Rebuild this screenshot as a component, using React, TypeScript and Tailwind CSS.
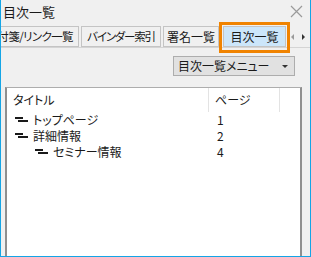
import React from "react";

interface TocRow {
  title: string;
  page: number;
  level: number;
}

const rows: TocRow[] = [
  { title: "トップページ", page: 1, level: 0 },
  { title: "詳細情報", page: 2, level: 0 },
  { title: "セミナー情報", page: 4, level: 1 },
];

function NodeIcon() {
  return (
    <svg width="13" height="6" viewBox="0 0 13 6" className="shrink-0">
      <rect x="0" y="0" width="8" height="2" fill="#1a1a1a" />
      <rect x="3" y="3" width="10" height="2" fill="#1a1a1a" />
    </svg>
  );
}

export default function App() {
  return (
    <div
      className="relative w-[311px] h-[257px] bg-[#f0f0f0] border-x border-b border-[#14a5e6] flex flex-col overflow-hidden text-[#1a1a1a] [font-feature-settings:'palt']"
      style={{ fontFamily: '"Noto Sans CJK JP", "Noto Sans", sans-serif' }}
    >
      {/* title bar */}
      <div className="h-[23px] flex items-center justify-between pl-[2px] pr-[7px] shrink-0">
        <span className="text-[13px] leading-none">目次一覧</span>
        <svg width="13" height="13" viewBox="0 0 13 13">
          <path d="M1 1 L12 12 M12 1 L1 12" stroke="#9a9a9a" strokeWidth="1.2" />
        </svg>
      </div>

      {/* tab strip */}
      <div className="h-[25px] flex items-end shrink-0 border-b border-[#d4d4d4]">
        <div className="flex items-end overflow-hidden w-[286px] h-[21px] text-[12px] whitespace-nowrap">
          <div className="h-[21px] w-[90px] shrink-0 -ml-[12px] pr-[5px] border border-[#c4c4c4] bg-[#f0f0f0] flex items-center justify-end text-[11.5px] tracking-[-0.6px]">
            付箋/リンク一覧
          </div>
          <div className="h-[21px] w-[80px] shrink-0 ml-[2px] border border-[#c4c4c4] bg-[#f0f0f0] flex items-center justify-center text-[11.5px] tracking-[-1.2px]">
            <span>バインダー索引</span>
          </div>
          <div className="h-[21px] w-[56px] shrink-0 ml-[2px] border border-[#c4c4c4] bg-[#f0f0f0] flex items-center justify-center">
            署名一覧
          </div>
          <div className="h-[21px] w-[63px] shrink-0 ml-[4px] border border-[#c4c4c4] bg-[#cce6fa] flex items-center justify-center">
            目次一覧
          </div>
        </div>
        <div className="flex items-center gap-[8px] h-[21px] pl-[4px]">
          <span className="w-0 h-0 border-y-[3px] border-y-transparent border-r-[3px] border-r-[#9a9a9a]" />
          <span className="w-0 h-0 border-y-[3px] border-y-transparent border-l-[3px] border-l-[#333]" />
        </div>
      </div>

      {/* orange highlight over the active tab */}
      <div className="absolute left-[218px] top-[22px] w-[71px] h-[31px] border-[3px] border-[#f08300]" />

      {/* panel */}
      <div className="flex-1 flex flex-col pl-[4px] pr-[8px] pt-[8px] min-h-0">
        <div className="flex justify-end pr-[7px]">
          <button className="w-[122px] h-[20px] border border-[#adadad] bg-[#e1e1e1] flex items-center justify-between pl-[4px] pr-[6px] text-[12px]">
            <span>目次一覧メニュー</span>
            <span className="w-0 h-0 border-x-[3px] border-x-transparent border-t-[3px] border-t-[#333]" />
          </button>
        </div>

        <div className="mt-[11px] flex-1 bg-white border-t border-x-2 border-t-[#adadad] border-x-[#8f8f8f]">
          <div className="flex h-[24px] text-[12px]">
            <div className="w-[202px] pl-[6px] flex items-center border-r border-[#e3e3e3]">タイトル</div>
            <div className="w-[71px] pl-[6px] flex items-center border-r border-[#e3e3e3]">ページ</div>
          </div>
          {rows.map((r) => (
            <div key={r.title} className="flex h-[16px] text-[12px]">
              <div
                className={`w-[202px] flex items-center gap-[5px] ${r.level === 1 ? "pl-[28px]" : "pl-[8px]"}`}
              >
                <NodeIcon />
                <span>{r.title}</span>
              </div>
              <div className="pl-[8px] flex items-center">{r.page}</div>
            </div>
          ))}
        </div>
      </div>
    </div>
  );
}
